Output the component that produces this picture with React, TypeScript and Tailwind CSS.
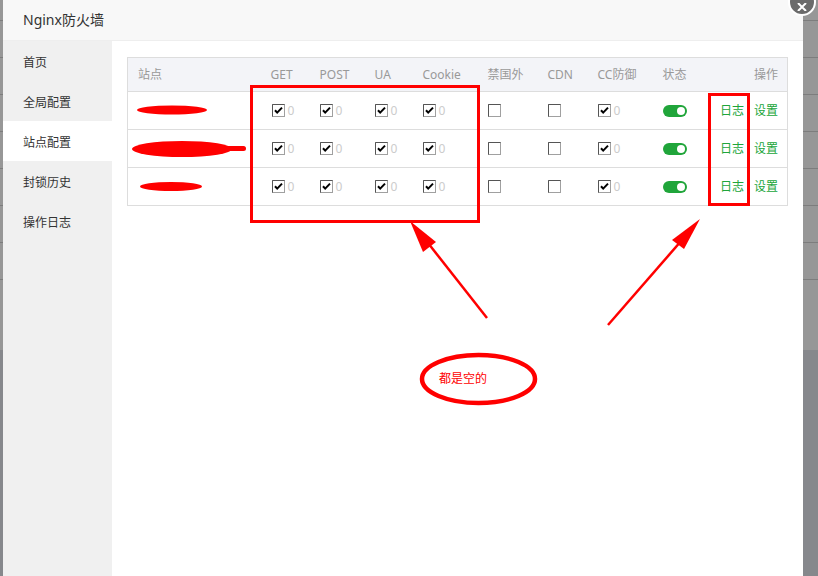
import React from 'react';

const FONT = { fontFamily: '"Noto Sans", "Noto Sans CJK SC", sans-serif' };

const MENU = ['首页', '全局配置', '站点配置', '封锁历史', '操作日志'];

const COLS = [
  { label: '站点', w: 133 },
  { label: 'GET', w: 49 },
  { label: 'POST', w: 55 },
  { label: 'UA', w: 48 },
  { label: 'Cookie', w: 65 },
  { label: '禁国外', w: 60 },
  { label: 'CDN', w: 50 },
  { label: 'CC防御', w: 65 },
  { label: '状态', w: 47 },
];

function Box({ checked }: { checked: boolean }) {
  return (
    <svg width="13" height="13" viewBox="0 0 13 13" className="shrink-0">
      <rect x="0.5" y="0.5" width="12" height="12" fill="#fff" stroke="#a0a0a0" />
      <path d="M0.5 12.5 V0.5 H12.5" fill="none" stroke="#555" />
      {checked && <path d="M3 6.2 L5.2 8.6 L10 3.6" fill="none" stroke="#000" strokeWidth="2" />}
    </svg>
  );
}

function Flag({ checked }: { checked: boolean }) {
  return (
    <div className="flex items-center gap-[3px]">
      <Box checked={checked} />
      {checked && <span className="text-[12px] text-[#ccc] leading-none">0</span>}
    </div>
  );
}

function Toggle() {
  return (
    <div className="w-[24px] h-[12px] rounded-full bg-[#20a53a] flex items-center justify-end pr-[2px]">
      <div className="w-[8px] h-[8px] rounded-full bg-white" />
    </div>
  );
}

// dimmed page behind the dialog
function BgStrip({ wide }: { wide?: boolean }) {
  return (
    <div className={`${wide ? 'flex-1' : 'w-[3px]'} flex flex-col`}>
      <div className="h-[350px] bg-[#979797] flex flex-col pt-[20px]">
        {[0, 1, 2, 3, 4, 5, 6, 7].map((i) => (
          <div key={i} className="h-[37px] border-t border-[#7d7d7d] shrink-0" />
        ))}
      </div>
      <div className="flex-1 bg-[#86888c]" />
    </div>
  );
}

export default function App() {
  return (
    <div className="w-[818px] h-[576px] relative overflow-hidden flex bg-[#86888c]" style={FONT}>
      <BgStrip />
      <div className="w-[800px] h-full flex flex-col bg-white">
        <div className="h-[41px] bg-[#f8f8f8] border-b border-[#eee] flex items-center pl-[20px] pb-[1px] text-[14px] text-[#333]">
          Nginx防火墙
        </div>
        <div className="flex-1 flex">
          <div className="w-[110px] bg-[#f0f0f0] flex flex-col">
            {MENU.map((m, i) => (
              <div key={m} className={`h-[40px] flex items-center pl-[20px] pt-[4px] text-[12px] text-[#333] ${i === 2 ? 'bg-white' : ''}`}>
                {m}
              </div>
            ))}
          </div>
          <div className="flex-1 pt-[16px] px-[15px]">
            <table className="w-[660px] border border-[#ddd] border-collapse text-[12px] table-fixed">
              <colgroup>
                {COLS.map((c) => <col key={c.label} style={{ width: c.w }} />)}
                <col style={{ width: 88 }} />
              </colgroup>
              <thead>
                <tr className="h-[34px] bg-[#f3f4f8] text-[#999] border-b border-[#ddd]">
                  {COLS.map((c) => (
                    <th key={c.label} className="font-normal text-left pl-[10px] whitespace-nowrap">{c.label}</th>
                  ))}
                  <th className="font-normal text-right pr-[9px]">操作</th>
                </tr>
              </thead>
              <tbody>
                {[0, 1, 2].map((r) => (
                  <tr key={r} className="h-[38px] border-b border-[#ddd]">
                    <td className="pl-[10px]" />
                    <td className="pl-[11px]"><Flag checked /></td>
                    <td className="pl-[10px]"><Flag checked /></td>
                    <td className="pl-[10px]"><Flag checked /></td>
                    <td className="pl-[10px]"><Flag checked /></td>
                    <td className="pl-[10px]"><Flag checked={false} /></td>
                    <td className="pl-[10px]"><Flag checked={false} /></td>
                    <td className="pl-[10px]"><Flag checked /></td>
                    <td className="pl-[10px]"><Toggle /></td>
                    <td className="pr-[9px]">
                      <div className="flex justify-end gap-[10px] text-[#20a53a]">
                        <span>日志</span>
                        <span>设置</span>
                      </div>
                    </td>
                  </tr>
                ))}
              </tbody>
            </table>
          </div>
        </div>
      </div>
      <BgStrip wide />

      {/* close button of the dialog */}
      <div className="absolute left-[788px] top-[-12px] w-[28px] h-[28px] rounded-full bg-[#6b6b6b] border-2 border-white flex items-end justify-center pb-[3px]">
        <svg width="10" height="8" viewBox="0 0 10 8">
          <path d="M1 0 L9 8 M9 0 L1 8" stroke="#fff" strokeWidth="2" />
        </svg>
      </div>

      {/* red annotations drawn over the screenshot */}
      <svg className="absolute inset-0 pointer-events-none" width="818" height="576" viewBox="0 0 818 576">
        <g fill="#f00">
          <ellipse cx="172" cy="110" rx="35" ry="4.5" />
          <ellipse cx="182" cy="149" rx="50" ry="8" />
          <rect x="215" y="146" width="31" height="5" rx="2.5" />
          <ellipse cx="171" cy="186.5" rx="31" ry="4.5" />
        </g>
        <g fill="none" stroke="#f00" strokeWidth="3">
          <rect x="251.5" y="86.5" width="227" height="135" />
          <rect x="709.5" y="94.5" width="39" height="110" />
        </g>
        <g stroke="#f00" strokeWidth="2.5">
          <line x1="487" y1="318" x2="428" y2="243" />
          <line x1="608" y1="325" x2="682" y2="240" />
        </g>
        <g fill="#f00">
          <polygon points="410,221 436,242 423,252" />
          <polygon points="700,219 684,249 672,240" />
        </g>
        <ellipse cx="478.5" cy="379" rx="56.5" ry="24" fill="none" stroke="#f00" strokeWidth="4.5" />
        <text x="439" y="383" fontSize="12" fill="#f00" style={FONT}>都是空的</text>
      </svg>
    </div>
  );
}
